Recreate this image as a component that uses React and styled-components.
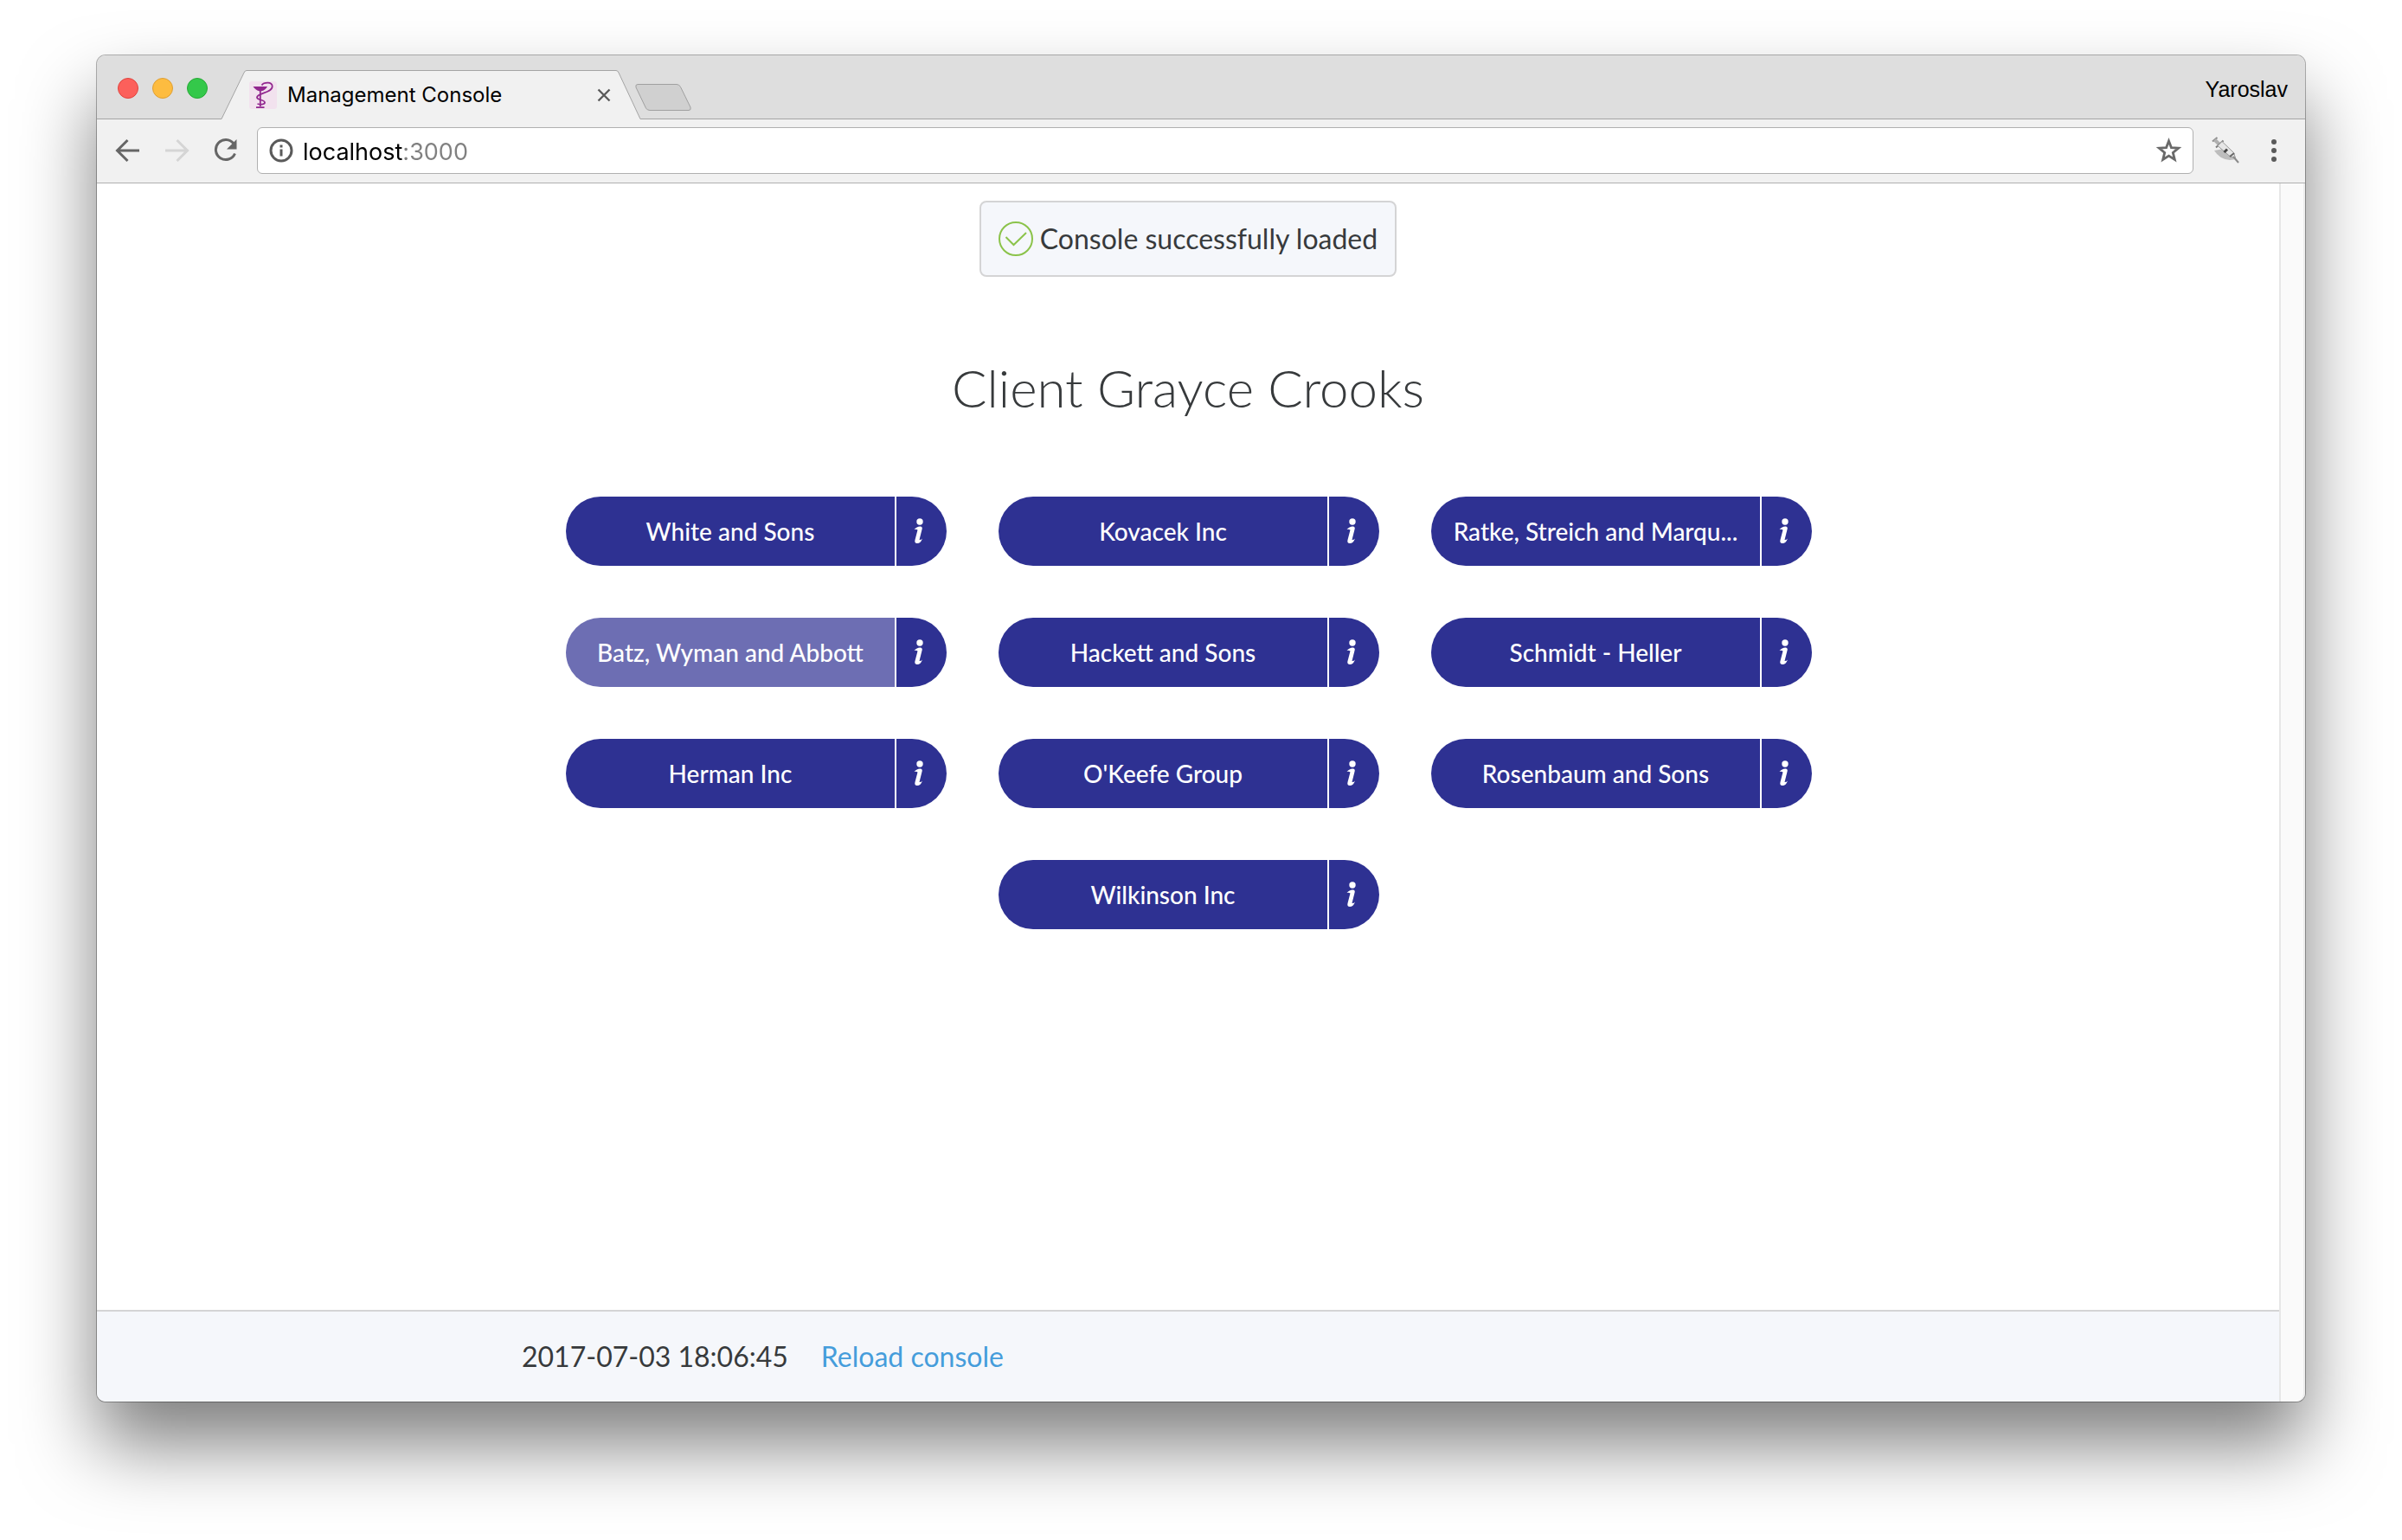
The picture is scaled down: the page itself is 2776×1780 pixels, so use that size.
import React from "react";
import styled, { createGlobalStyle, css } from "styled-components";

const ui = `Inter, Roboto, "Liberation Sans", sans-serif`;
const line = "#a4a4a4";
const ink = "#373a3c";
const brand = "#2e3192";

const GlobalStyle = createGlobalStyle`
  *, *::before, *::after { box-sizing: border-box; }
  body { margin: 0; background: #fff; color: ${ink}; font-family: Lato, "Open Sans", sans-serif; }
  button { margin: 0; padding: 0; border: 0; background: none; font: inherit; color: inherit; cursor: pointer; }
  svg { display: block; flex: none; }
`;

const Desktop = styled.div`
  min-height: 100vh;
  padding: 64px 112px 160px;
  display: flex;
  overflow: hidden;
`;

const Window = styled.div`
  flex: 1;
  min-width: 0;
  display: flex;
  flex-direction: column;
  border-radius: 10px;
  background: #fff;
  box-shadow: 0 0 0 1px rgba(0, 0, 0, 0.3), 0 50px 86px rgba(0, 0, 0, 0.5);
`;

const TabStrip = styled.header`
  height: 74px;
  display: flex;
  align-items: flex-end;
  background: #dedede;
  border-radius: 10px 10px 0 0;
  box-shadow: inset 0 -1px 0 ${line};
`;

const Lights = styled.div`
  width: 144px;
  height: 74px;
  padding: 2px 0 0 24px;
  display: flex;
  align-items: center;
  gap: 16px;
`;

const Light = styled.button`
  width: 24px;
  height: 24px;
  border-radius: 50%;
  background: ${(p) => p.$fill};
  border: 1px solid ${(p) => p.$edge};
`;

const Tab = styled.div`
  position: relative;
  width: 484px;
  height: 57px;
  padding: 0 34px 0 32px;
  display: flex;
  align-items: center;
  gap: 12px;
  font: 24px/32px ${ui};
  color: #000;
`;

const TabShape = styled.svg`
  position: absolute;
  inset: 0;
`;

const TabIcon = styled.svg`
  position: relative;
`;

const TabTitle = styled.span`
  position: relative;
  flex: 1;
`;

const TabClose = styled.button`
  position: relative;
`;

const NewTab = styled.button`
  align-self: flex-start;
  margin: 32px 0 0 -8px;
`;

const Profile = styled.button`
  && {
    height: 74px;
    margin: 0 20px 0 auto;
    padding: 4px 0 0;
    font: 25px/28px "Liberation Sans", sans-serif;
    color: #000;
  }
`;

const Toolbar = styled.div`
  height: 74px;
  padding: 0 28px 1px 21px;
  display: flex;
  align-items: center;
  background: #f1f1f1;
  border-bottom: 1px solid #b0b0b0;
`;

const NavButtons = styled.div`
  display: flex;
  gap: 24px;
  margin-right: 20px;
`;

const Omnibox = styled.label`
  flex: 1;
  min-width: 0;
  height: 54px;
  padding: 0 12px;
  display: flex;
  align-items: center;
  gap: 10px;
  background: #fff;
  border: 1px solid #b0b0b0;
  border-radius: 6px;
`;

const Address = styled.input`
  flex: 1;
  min-width: 0;
  height: 42px;
  padding: 2px 0 0;
  border: 0;
  outline: 0;
  font: 27px/40px ${ui};
  color: transparent;
  background: linear-gradient(90deg, #000 116px, #808080 116px);
  background-clip: text;
  -webkit-background-clip: text;
`;

const Extensions = styled.div`
  margin-left: 20px;
  display: flex;
  align-items: center;
  gap: 31px;
`;

const Viewport = styled.div`
  flex: 1;
  display: flex;
`;

const Page = styled.div`
  flex: 1;
  min-width: 0;
  display: flex;
  flex-direction: column;
`;

const ScrollTrack = styled.div`
  width: 30px;
  border-left: 2px solid #e7e7e7;
  border-right: 2px solid #ededed;
  border-bottom-right-radius: 10px;
  background: #fafafa;
`;

const Main = styled.main`
  flex: 1;
  padding: 20px 40px 60px;
  display: flex;
  flex-direction: column;
  align-items: center;
`;

const Message = styled.div`
  height: 88px;
  padding: 0 20px;
  display: flex;
  align-items: center;
  gap: 8px;
  border: 2px solid #d4d4d5;
  border-radius: 8px;
  background: #f5f7fb;
  font-size: 32px;
  line-height: 40px;
`;

const Title = styled.h1`
  margin: 90px 0 88px;
  font-size: 60px;
  line-height: 76px;
  font-weight: 300;
`;

const ClientList = styled.div`
  max-width: 1442px;
  padding-left: 2px;
  display: flex;
  flex-wrap: wrap;
  justify-content: center;
  gap: 60px;
`;

const Pill = styled.div`
  width: 440px;
  height: 80px;
  display: flex;
  gap: 2px;
  border-radius: 40px;
  overflow: hidden;
`;

const pillPart = css`
  height: 80px;
  color: #fff;
  background: ${brand};
`;

const ClientButton = styled.button`
  && {
    ${pillPart}
    width: 380px;
    padding: 0 20px;
    font-size: 28px;
    line-height: 80px;
    font-weight: 500;
    white-space: nowrap;
    background: ${(p) => (p.$active ? "#6d6eb3" : brand)};
  }
`;

const InfoButton = styled.button`
  && {
    ${pillPart}
    flex: 1;
    padding-left: 20px;
  }
`;

const Footer = styled.footer`
  padding: 32px 40px;
  border-top: 2px solid #d4d4d5;
  border-bottom-left-radius: 10px;
  background: #f5f7fb;
  font-size: 32px;
  line-height: 40px;
`;

const FooterInner = styled.div`
  max-width: 1540px;
  margin: 0 auto;
  display: flex;
  gap: 38px;
`;

const Reload = styled.a`
  color: #459ddb;
  text-decoration: none;
`;

const Stroke = ({ size = 32, color = "#5f5f5f", width = 3, children }) => (
  <svg width={size} height={size} viewBox="0 0 32 32" fill="none" stroke={color} strokeWidth={width}>
    {children}
  </svg>
);

const clients = [
  "White and Sons",
  "Kovacek Inc",
  "Ratke, Streich and Marquardt",
  "Batz, Wyman and Abbott",
  "Hackett and Sons",
  "Schmidt - Heller",
  "Herman Inc",
  "O'Keefe Group",
  "Rosenbaum and Sons",
  "Wilkinson Inc",
];

const shorten = (name, limit = 24) => (name.length > limit ? `${name.slice(0, limit)}...` : name);

export default function App() {
  return (
    <>
      <GlobalStyle />
      <Desktop>
        <Window>
          <TabStrip>
            <Lights>
              <Light aria-label="Close window" $fill="#fc605b" $edge="#e0443e" />
              <Light aria-label="Minimize window" $fill="#fdbc40" $edge="#de9f34" />
              <Light aria-label="Zoom window" $fill="#34c84a" $edge="#27a936" />
            </Lights>
            <Tab>
              <TabShape width="484" height="57" viewBox="0 0 484 57">
                <path d="M0 56.5 L26 3 Q27 .5 29 .5 H456 Q458 .5 459 3 L484 56.5 V57 H0Z" fill="#f1f1f1" />
                <path d="M0 56.5 L26 3 Q27 .5 29 .5 H456 Q458 .5 459 3 L484 56.5" fill="none" stroke={line} />
              </TabShape>
              <TabIcon width="32" height="32" viewBox="0 0 32 32" fill="none" stroke="#92278f">
                <rect width="32" height="32" rx="3" fill="#f2e2ee" stroke="none" />
                <path d="M4.500 6H21q-2 4-6.500 5.200h-3Q7 10 4.500 6z" fill="#92278f" stroke="none" />
                <path d="M12.800 10v19M8 30.200h9.500" strokeWidth="1.800" />
                <path d="M14.500 4.500C17 1 27 0 26.700 6C26.500 13.500 9 13.500 9 18.500C9 22 18 21 18 24.500C18 27 12.500 27 9.500 26" strokeWidth="1.800" />
              </TabIcon>
              <TabTitle>Management Console</TabTitle>
              <TabClose aria-label="Close tab">
                <svg width="16" height="16" viewBox="0 0 16 16" stroke="#5a5a5a" strokeWidth="2.4">
                  <path d="M1.500 1.500l13 13M14.500 1.500l-13 13" />
                </svg>
              </TabClose>
            </Tab>
            <NewTab aria-label="New tab">
              <svg width="68" height="34" viewBox="0 0 68 34">
                <path d="M5 1.500H50Q53 1.500 54.500 4.500L66 28Q67 31.500 64 31.500H19Q16 31.500 14.500 29L3 5Q2 1.500 5 1.500Z" fill="#d0d0d0" stroke="#a0a0a0" />
              </svg>
            </NewTab>
            <Profile>Yaroslav</Profile>
          </TabStrip>

          <Toolbar>
            <NavButtons>
              <button aria-label="Back">
                <Stroke color="#666"><path d="M28 16H3M14.500 4L2.500 16l12 12" /></Stroke>
              </button>
              <button aria-label="Forward">
                <Stroke color="#d5d5d5"><path d="M2 16H27M15.500 4L27.500 16l-12 12" /></Stroke>
              </button>
              <button aria-label="Reload">
                <Stroke color="#666">
                  <path d="M25 8A11.500 11.500 0 1 0 26.500 19.500" />
                  <path d="M28.500 3V14.500H17z" fill="#666" stroke="none" />
                </Stroke>
              </button>
            </NavButtons>
            <Omnibox>
              <svg width="30" height="30" viewBox="0 0 30 30" fill="none" stroke="#5a5a5a" strokeWidth="3">
                <circle cx="15" cy="15" r="12" />
                <path d="M15 13.500v8M15 8.500v3" />
              </svg>
              <Address aria-label="Address" defaultValue="localhost:3000" spellCheck={false} />
              <svg width="30" height="30" viewBox="0 0 30 30" fill="none" stroke="#6a6a6a" strokeWidth="2.800">
                <path d="M14.500 4l2.900 7.600 8.300.6-6.400 5.200 2 8-6.800-4.300-6.800 4.300 2-8L3.300 12.200l8.300-.6z" />
              </svg>
            </Omnibox>
            <Extensions>
              <svg width="34" height="34" viewBox="0 0 34 34" fill="none">
                <path d="M4 17q6 10 18 11l7-1-14-12z" fill="#bdbdbd" />
                <path d="M2 6.500L7.500 2" stroke="#8a8a8a" strokeWidth="2" />
                <path d="M4.500 4.500L10 10" stroke="#b0b0b0" strokeWidth="4" />
                <path d="M6 13.500L14.500 5.500" stroke="#7d7d7d" strokeWidth="2" />
                <path d="M8 11.500l5-5L26.500 19.500l2 6-6-1.500z" fill="#e6e6e6" stroke="#999" />
                <path d="M15.500 19l3.500-3.500" stroke="#444" strokeWidth="3" />
                <path d="M22 24l5-4" stroke="#666" strokeWidth="2" />
                <path d="M26 24l6 7" stroke="#8a8a8a" strokeWidth="2" />
              </svg>
              <svg width="16" height="32" viewBox="0 0 16 32" fill="#5a5a5a">
                <circle cx="8" cy="6" r="3" />
                <circle cx="8" cy="16" r="3" />
                <circle cx="8" cy="26" r="3" />
              </svg>
            </Extensions>
          </Toolbar>

          <Viewport>
            <Page>
              <Main>
                <Message role="status">
                  <svg width="40" height="40" viewBox="0 0 40 40" fill="none" stroke="#8bc34a" strokeWidth="2">
                    <circle cx="20" cy="20" r="19" />
                    <path d="M8.500 18l9 9L32 13" />
                  </svg>
                  Console successfully loaded
                </Message>
                <Title>Client Grayce Crooks</Title>
                <ClientList>
                  {clients.map((name) => (
                    <Pill key={name}>
                      <ClientButton $active={name.startsWith("Batz")}>{shorten(name)}</ClientButton>
                      <InfoButton aria-label={`About ${shorten(name)}`}>
                        <svg width="12" height="30" viewBox="0 0 12 30" fill="#fff">
                          <circle cx="7" cy="4" r="3.700" />
                          <path d="M.5 13Q4 9 8 9.500Q10.500 10 9.500 13L6.500 25Q9 25 10 23.500Q8 29 4 29Q.5 29 1.500 25L4.500 13.500Q3 12.500 .5 13Z" />
                        </svg>
                      </InfoButton>
                    </Pill>
                  ))}
                </ClientList>
              </Main>
              <Footer>
                <FooterInner>
                  <time dateTime="2017-07-03T18:06:45">2017-07-03 18:06:45</time>
                  <Reload href="#reload">Reload console</Reload>
                </FooterInner>
              </Footer>
            </Page>
            <ScrollTrack />
          </Viewport>
        </Window>
      </Desktop>
    </>
  );
}
